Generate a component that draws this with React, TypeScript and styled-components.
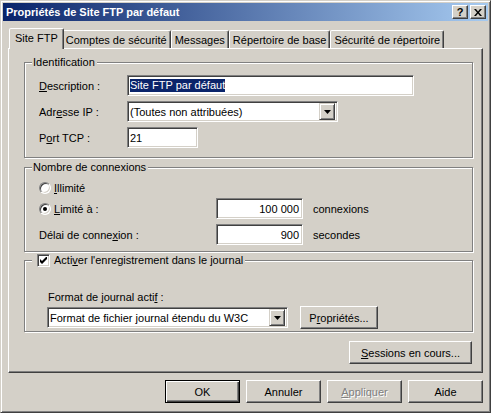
import React from 'react';
import styled, {createGlobalStyle} from 'styled-components';

const FACE = '#D4D0C8';

const GlobalStyle = createGlobalStyle`
  body {
    margin: 0;
    background: ${FACE};
    font-family: "Liberation Sans", Arial, sans-serif;
    font-size: 11px;
    color: #000;
  }
`;

const Window = styled.div`
  width: 491px;
  height: 413px;
  box-sizing: border-box;
  background: ${FACE};
  border: 1px solid;
  border-color: ${FACE} #404040 #404040 ${FACE};
  box-shadow: inset 1px 1px 0 #fff, inset -1px -1px 0 #808080;
  padding: 2px;
  display: flex;
  flex-direction: column;
`;

const TitleBar = styled.div`
  height: 18px;
  display: flex;
  align-items: center;
  padding: 0 2px 0 3px;
  background: linear-gradient(to right, #0a246a, #a6caf0);
`;

const TitleText = styled.span`
  color: #fff;
  font-weight: bold;
  font-size: 11px;
  flex: 1;
  white-space: nowrap;
`;

const CaptionButton = styled.div<{gap?: number}>`
  width: 16px;
  height: 14px;
  box-sizing: border-box;
  background: ${FACE};
  border: 1px solid;
  border-color: #fff #404040 #404040 #fff;
  box-shadow: inset -1px -1px 0 #808080;
  margin-left: ${p => p.gap ?? 0}px;
  display: flex;
  align-items: center;
  justify-content: center;
  font-weight: bold;
  font-size: 11px;
  line-height: 1;
`;

const Body = styled.div`
  padding: 7px 5px 0 5px;
  display: flex;
  flex-direction: column;
`;

const TabStrip = styled.div`
  display: flex;
  align-items: flex-end;
  height: 20px;
  padding-left: 3px;
`;

const Tab = styled.div<{active?: boolean}>`
  position: relative;
  box-sizing: border-box;
  height: ${p => (p.active ? 21 : 18)}px;
  margin: ${p => (p.active ? '0 -2px -1px -2px' : '0')};
  padding: ${p => (p.active ? '0 5px' : '0 3px')};
  padding-bottom: ${p => (p.active ? 3 : 0)}px;
  background: ${FACE};
  border: 1px solid;
  border-bottom: none;
  border-color: #fff #404040 transparent #fff;
  border-radius: 2px 2px 0 0;
  box-shadow: inset -1px 0 0 #808080;
  z-index: ${p => (p.active ? 2 : 0)};
  display: flex;
  align-items: center;
  white-space: nowrap;
`;

const Panel = styled.div`
  position: relative;
  z-index: 1;
  height: 325px;
  box-sizing: border-box;
  border: 1px solid;
  border-color: #fff #404040 #404040 #fff;
  box-shadow: inset -1px -1px 0 #808080;
  padding: 13px 9px 0 15px;
  display: flex;
  flex-direction: column;
`;

const Group = styled.div<{h: number; top?: number}>`
  position: relative;
  height: ${p => p.h}px;
  width: 449px;
  box-sizing: border-box;
  margin-top: ${p => p.top ?? 0}px;
  border: 1px solid #808080;
  box-shadow: inset 1px 1px 0 #fff, 1px 1px 0 #fff;
`;

const GroupTitle = styled.div<{indent?: number}>`
  position: absolute;
  top: -7px;
  left: 7px;
  padding: 0 2px 0 ${p => p.indent ?? 1}px;
  background: ${FACE};
  line-height: 13px;
  display: flex;
  align-items: center;
  gap: 4px;
  white-space: nowrap;
`;

const FormGrid = styled.div`
  display: grid;
  grid-template-columns: 88px auto;
  row-gap: 5px;
  padding: 12px 0 0 14px;
  align-items: center;
`;

const Label = styled.span`
  white-space: nowrap;
`;

const Field = styled.div<{w: number; right?: boolean}>`
  width: ${p => p.w}px;
  height: 21px;
  box-sizing: border-box;
  background: #fff;
  border: 1px solid;
  border-color: #808080 #fff #fff #808080;
  box-shadow: inset 1px 1px 0 #404040, inset -1px -1px 0 ${FACE};
  padding: 0 3px 0 2px;
  display: flex;
  align-items: center;
  justify-content: ${p => (p.right ? 'flex-end' : 'flex-start')};
  white-space: nowrap;
  overflow: hidden;
`;

const Selected = styled.span`
  background: #0a246a;
  color: #fff;
  line-height: 13px;
`;

const DropButton = styled.div`
  margin-left: auto;
  margin-right: -1px;
  width: 16px;
  height: 17px;
  box-sizing: border-box;
  background: ${FACE};
  border: 1px solid;
  border-color: ${FACE} #404040 #404040 ${FACE};
  box-shadow: inset 1px 1px 0 #fff, inset -1px -1px 0 #808080;
  display: flex;
  align-items: center;
  justify-content: center;
`;

const ConnGrid = styled.div`
  display: grid;
  grid-template-columns: 177px 87px auto;
  padding: 13px 0 0 14px;
  align-items: center;
`;

const RadioRow = styled.div<{span?: boolean; top?: number}>`
  display: flex;
  align-items: center;
  gap: 3px;
  height: 14px;
  grid-column: ${p => (p.span ? '1 / -1' : 'auto')};
  margin-top: ${p => p.top ?? 0}px;
`;

const Radio = styled.div<{checked?: boolean}>`
  width: 12px;
  height: 12px;
  box-sizing: border-box;
  border-radius: 50%;
  background: #fff;
  border: 1px solid;
  border-color: #808080 #fff #fff #808080;
  box-shadow: inset 1px 1px 0 #404040, inset -1px -1px 0 ${FACE};
  display: flex;
  align-items: center;
  justify-content: center;
  &::after {
    content: '';
    display: ${p => (p.checked ? 'block' : 'none')};
    width: 4px;
    height: 4px;
    border-radius: 50%;
    background: #000;
  }
`;

const Cell = styled.div<{top?: number}>`
  margin-top: ${p => p.top ?? 0}px;
`;

const Unit = styled(Cell)`
  padding-left: 10px;
`;

const Check = styled.div`
  width: 13px;
  height: 13px;
  box-sizing: border-box;
  background: #fff;
  border: 1px solid;
  border-color: #808080 #fff #fff #808080;
  box-shadow: inset 1px 1px 0 #404040, inset -1px -1px 0 ${FACE};
  display: flex;
  align-items: center;
  justify-content: center;
`;

const LogBody = styled.div`
  padding: 29px 0 0 22px;
  display: flex;
  flex-direction: column;
  gap: 2px;
`;

const LogLabel = styled.div`
  line-height: 14px;
  padding-left: 1px;
`;

const LogRow = styled.div`
  display: flex;
  align-items: center;
  gap: 12px;
  height: 23px;
`;

const Button = styled.div<{w: number; isDefault?: boolean; disabled?: boolean}>`
  width: ${p => p.w}px;
  height: 23px;
  box-sizing: border-box;
  background: ${FACE};
  border: 1px solid;
  border-color: ${p => (p.isDefault ? '#000' : '#fff #404040 #404040 #fff')};
  box-shadow: ${p =>
    p.isDefault
      ? 'inset 1px 1px 0 #fff, inset -1px -1px 0 #404040, inset -2px -2px 0 #808080'
      : 'inset -1px -1px 0 #808080'};
  display: flex;
  align-items: center;
  justify-content: center;
  white-space: nowrap;
  color: ${p => (p.disabled ? '#808080' : '#000')};
  text-shadow: ${p => (p.disabled ? '1px 1px 0 #fff' : 'none')};
`;

const SessionsRow = styled.div`
  display: flex;
  justify-content: flex-end;
  margin-top: 9px;
  padding-right: 1px;
`;

const ButtonBar = styled.div`
  display: flex;
  justify-content: flex-end;
  gap: 6px;
  margin-top: 7px;
`;

const U = styled.span`
  text-decoration: underline;
`;

const Arrow = () => (
  <svg width="7" height="4" viewBox="0 0 7 4">
    <path d="M0 0h7L3.5 4z" fill="#000" />
  </svg>
);

const tabs = ['Site FTP', 'Comptes de sécurité', 'Messages', 'Répertoire de base', 'Sécurité de répertoire'];

export default function App() {
  return (
    <Window>
      <GlobalStyle />
      <TitleBar>
        <TitleText>Propriétés de Site FTP par défaut</TitleText>
        <CaptionButton>?</CaptionButton>
        <CaptionButton gap={2}>
          <svg width="8" height="7" viewBox="0 0 8 7">
            <path d="M0 0h2l2 2.5L6 0h2L5 3.5 8 7H6L4 4.5 2 7H0l3-3.5z" fill="#000" />
          </svg>
        </CaptionButton>
      </TitleBar>
      <Body>
        <TabStrip>
          {tabs.map((t, i) => (
            <Tab key={t} active={i === 0}>
              {t}
            </Tab>
          ))}
        </TabStrip>
        <Panel>
          <Group h={96}>
            <GroupTitle>Identification</GroupTitle>
            <FormGrid>
              <Label>
                <U>D</U>escription :
              </Label>
              <Field w={287}>
                <Selected>Site FTP par défaut</Selected>
              </Field>
              <Label>
                Adr<U>e</U>sse IP :
              </Label>
              <Field w={211}>
                (Toutes non attribuées)
                <DropButton>
                  <Arrow />
                </DropButton>
              </Field>
              <Label>
                P<U>o</U>rt TCP :
              </Label>
              <Field w={71}>21</Field>
            </FormGrid>
          </Group>

          <Group h={85} top={9}>
            <GroupTitle>Nombre de connexions</GroupTitle>
            <ConnGrid>
              <RadioRow span>
                <Radio />
                <span>
                  <U>I</U>llimité
                </span>
              </RadioRow>
              <RadioRow top={3}>
                <Radio checked />
                <span>
                  <U>L</U>imité à :
                </span>
              </RadioRow>
              <Cell top={3}>
                <Field w={87} right>
                  100 000
                </Field>
              </Cell>
              <Unit top={3}>connexions</Unit>
              <Cell top={5}>
                <Label>
                  Délai de conne<U>x</U>ion :
                </Label>
              </Cell>
              <Cell top={5}>
                <Field w={87} right>
                  900
                </Field>
              </Cell>
              <Unit top={5}>secondes</Unit>
            </ConnGrid>
          </Group>

          <Group h={72} top={8}>
            <GroupTitle indent={5}>
              <Check>
                <svg width="7" height="7" viewBox="0 0 7 7">
                  <path d="M0 2v3l2 2 5-5V-1L2 4z" fill="#000" />
                </svg>
              </Check>
              <span>
                Acti<U>v</U>er l'enregistrement dans le journal
              </span>
            </GroupTitle>
            <LogBody>
              <LogLabel>
                Format de journal acti<U>f</U> :
              </LogLabel>
              <LogRow>
                <Field w={241}>
                  Format de fichier journal étendu du W3C
                  <DropButton>
                    <Arrow />
                  </DropButton>
                </Field>
                <Button w={78}>
                  P<U>r</U>opriétés...
                </Button>
              </LogRow>
            </LogBody>
          </Group>

          <SessionsRow>
            <Button w={123}>
              <U>S</U>essions en cours...
            </Button>
          </SessionsRow>
        </Panel>
        <ButtonBar>
          <Button w={75} isDefault>
            OK
          </Button>
          <Button w={75}>Annuler</Button>
          <Button w={75} disabled>
            <U>A</U>ppliquer
          </Button>
          <Button w={75}>Aide</Button>
        </ButtonBar>
      </Body>
    </Window>
  );
}
